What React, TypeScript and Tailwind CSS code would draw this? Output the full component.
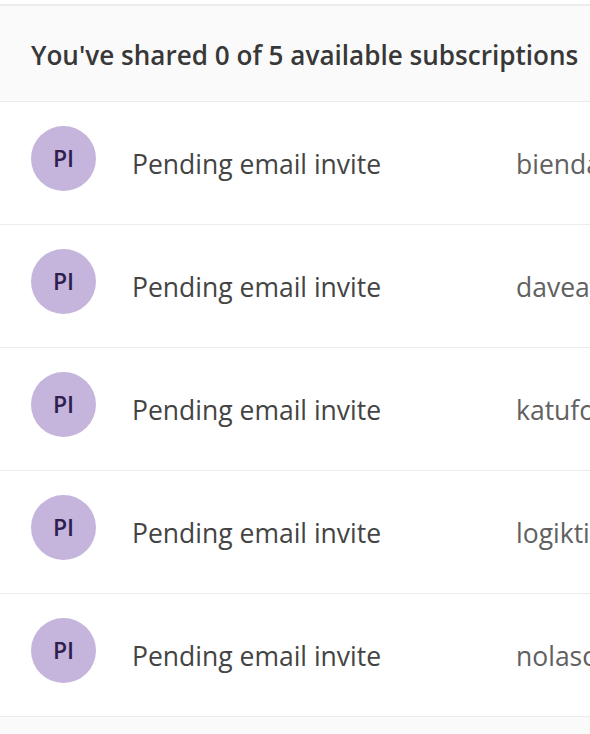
import React from 'react';

const invites = [
  'biendaniel@outlook.com',
  'daveaymes@outlook.com',
  'katufonte@outlook.com',
  'logiktinker@outlook.com',
  'nolascoria@outlook.com',
];

const App: React.FC = () => {
  return (
    <div className="min-h-screen w-[590px] overflow-hidden bg-[#fafafa] font-['Open_Sans',sans-serif]">
      <div className="h-[4px] bg-white" />
      {/* Summary header */}
      <div className="border-t-2 border-b border-[#ececec] bg-[#fafafa] h-[98px] flex items-center pl-[31px] pt-[4px]">
        <h2 className="text-[26.1px] font-semibold text-[#383838] whitespace-nowrap">
          You've shared 0 of 5 available subscriptions
        </h2>
      </div>

      {/* Pending invites */}
      <ul className="bg-white">
        {invites.map((email) => (
          <li
            key={email}
            className="h-[123px] border-b border-[#ececec] flex items-center pl-[31px] whitespace-nowrap"
          >
            <div className="w-[65px] h-[65px] shrink-0 rounded-full bg-[#c5b5dd] flex items-center justify-center -mt-[9px]">
              <span className="text-[23px] font-semibold text-[#2e1f4f]">PI</span>
            </div>
            <span className="ml-[36px] w-[384px] shrink-0 text-[26.5px] text-[#444444] pt-[4px]">
              Pending email invite
            </span>
            <span className="min-w-0 flex-1 overflow-hidden text-[26.5px] text-[#616161] pt-[4px]">
              {email}
            </span>
          </li>
        ))}
      </ul>
    </div>
  );
};

export default App;
